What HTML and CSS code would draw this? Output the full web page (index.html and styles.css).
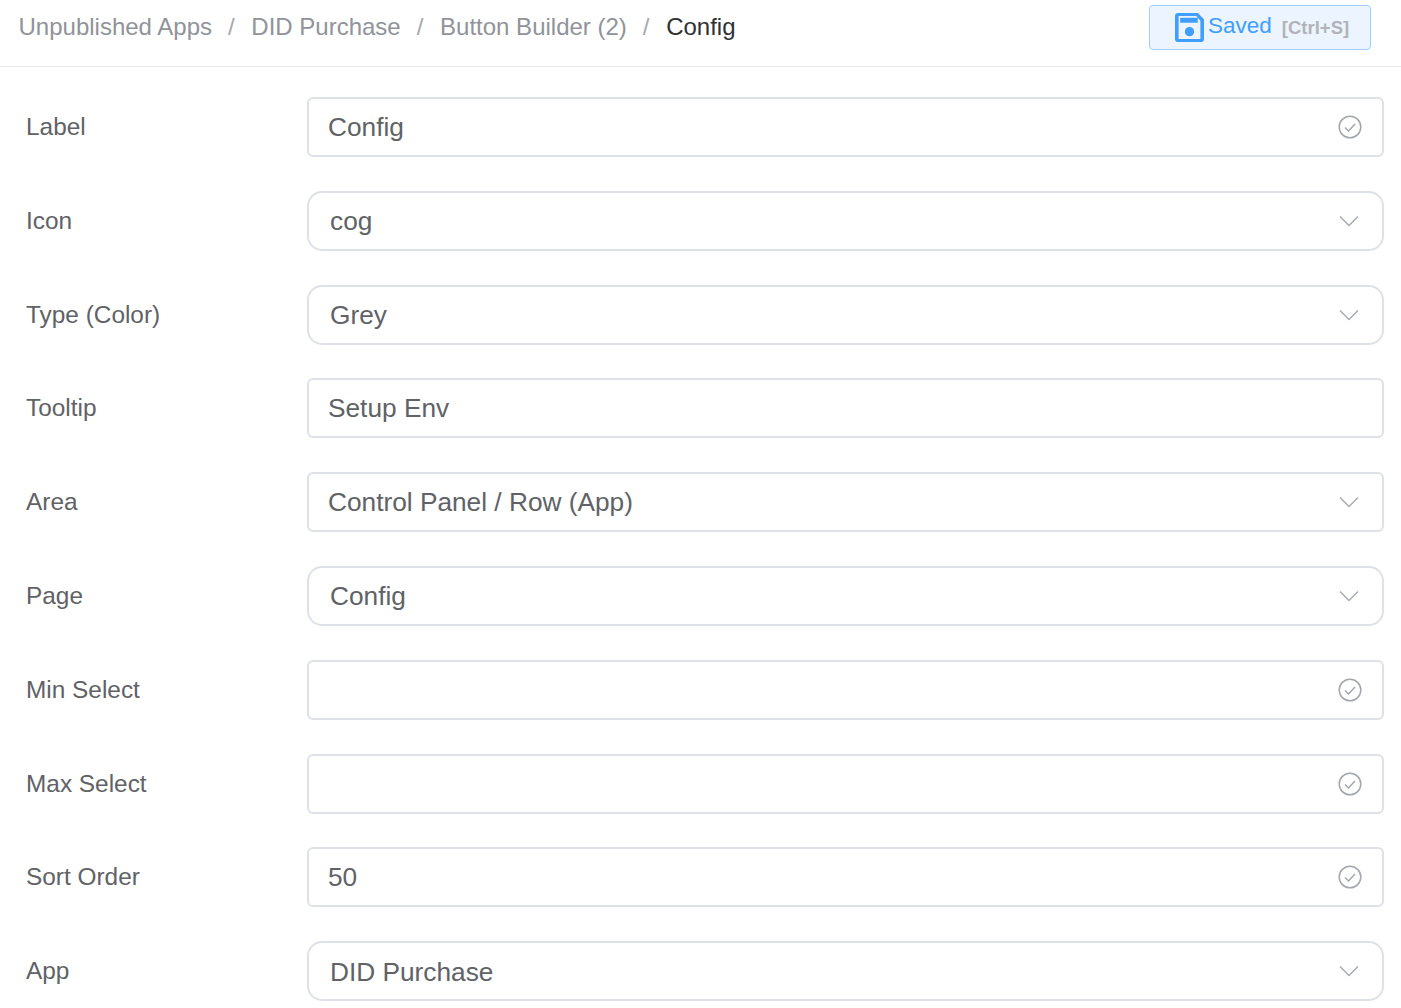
FILE: index.html
```html
<!DOCTYPE html>
<html lang="en">
<head>
    <meta charset="UTF-8">
    <title>Config</title>
    <link rel="stylesheet" href="styles.css">
</head>
<body>
    <div class="header">
        <div class="breadcrumb">
            <span class="crumb">Unpublished Apps</span><span class="sep">/</span>
            <span class="crumb">DID Purchase</span><span class="sep">/</span>
            <span class="crumb">Button Builder (2)</span><span class="sep">/</span>
            <span class="crumb current">Config</span>
        </div>
        <button class="save-btn">
            <svg class="save-icon" viewBox="0 0 28 28"><path fill="#409eff" fill-rule="evenodd" d="M3 0h19l6 6v19a3 3 0 0 1-3 3H3a3 3 0 0 1-3-3V3a3 3 0 0 1 3-3zM3.500 3v22h21V7.500L20.500 3zM5 4.500h17v5H5zM14 13.500a4.500 4.500 0 1 1 0 9 4.500 4.500 0 0 1 0-9z"/></svg>
            <span class="saved">Saved</span>
            <span class="shortcut">[Ctrl+S]</span>
        </button>
    </div>

    <form class="form">
        <div class="row">
            <label>Label</label>
            <div class="field"><span class="value">Config</span><svg class="check" viewBox="0 0 24 24"><circle cx="12" cy="12" r="10.800"/><path d="M7 12.500l3.500 3.500L17 9"/></svg></div>
        </div>
        <div class="row">
            <label>Icon</label>
            <div class="field round"><span class="value">cog</span><svg class="arrow" viewBox="0 0 20 12"><path d="M1 1.500l9 9 9-9"/></svg></div>
        </div>
        <div class="row">
            <label>Type (Color)</label>
            <div class="field round"><span class="value">Grey</span><svg class="arrow" viewBox="0 0 20 12"><path d="M1 1.500l9 9 9-9"/></svg></div>
        </div>
        <div class="row">
            <label>Tooltip</label>
            <div class="field"><span class="value">Setup Env</span></div>
        </div>
        <div class="row">
            <label>Area</label>
            <div class="field"><span class="value">Control Panel / Row (App)</span><svg class="arrow" viewBox="0 0 20 12"><path d="M1 1.500l9 9 9-9"/></svg></div>
        </div>
        <div class="row">
            <label>Page</label>
            <div class="field round"><span class="value">Config</span><svg class="arrow" viewBox="0 0 20 12"><path d="M1 1.500l9 9 9-9"/></svg></div>
        </div>
        <div class="row">
            <label>Min Select</label>
            <div class="field"><span class="value"></span><svg class="check" viewBox="0 0 24 24"><circle cx="12" cy="12" r="10.800"/><path d="M7 12.500l3.500 3.500L17 9"/></svg></div>
        </div>
        <div class="row">
            <label>Max Select</label>
            <div class="field"><span class="value"></span><svg class="check" viewBox="0 0 24 24"><circle cx="12" cy="12" r="10.800"/><path d="M7 12.500l3.500 3.500L17 9"/></svg></div>
        </div>
        <div class="row">
            <label>Sort Order</label>
            <div class="field"><span class="value">50</span><svg class="check" viewBox="0 0 24 24"><circle cx="12" cy="12" r="10.800"/><path d="M7 12.500l3.500 3.500L17 9"/></svg></div>
        </div>
        <div class="row">
            <label>App</label>
            <div class="field round"><span class="value">DID Purchase</span><svg class="arrow" viewBox="0 0 20 12"><path d="M1 1.500l9 9 9-9"/></svg></div>
        </div>
    </form>
</body>
</html>
```

FILE: styles.css
```css
html, body {
    height: 100%;
    overflow: hidden;
}
body {
    margin: 0;
    background: white;
    font-family: "Liberation Sans", Arial, sans-serif;
    color: #606266;
}
.header {
    height: 67px;
    box-sizing: border-box;
    border-bottom: 1px solid #e6e6ee;
    display: flex;
    align-items: flex-start;
    justify-content: space-between;
    padding: 5px 30px 0 18.500px;
}
.breadcrumb {
    font-size: 24px;
    line-height: 44px;
    color: #909399;
    white-space: nowrap;
}
.sep {
    margin: 0 10px 0 16px;
    color: #a6a9ad;
}
.current {
    color: #303133;
}
.save-btn {
    display: flex;
    align-items: center;
    width: 222px;
    height: 45px;
    padding: 0 0 0 25px;
    border: 1px solid #a0cfff;
    border-radius: 4px;
    background: #ecf5ff;
    color: #409eff;
    font-family: inherit;
    font-size: 22.500px;
    white-space: nowrap;
}
.save-icon {
    width: 29px;
    height: 29px;
    margin-right: 4px;
    flex: none;
}
.saved {
    margin-bottom: 3px;
}
.shortcut {
    margin-left: 10px;
    font-size: 18.500px;
    font-weight: bold;
    color: #b1b3b8;
}
.form {
    padding: 30px 17px 0 26px;
}
.row {
    display: flex;
    align-items: center;
    height: 60px;
    margin-bottom: 33.800px;
}
.row label {
    width: 281px;
    flex: none;
    font-size: 24.400px;
}
.field {
    flex: 1;
    height: 60px;
    box-sizing: border-box;
    display: flex;
    align-items: center;
    justify-content: space-between;
    padding: 0 20px 0 19px;
    border: 2px solid #dfe1e8;
    border-radius: 6px;
}
.field.round {
    border-radius: 15px;
    padding-left: 21px;
}
.value {
    font-size: 26.250px;
}
.round .value {
    margin-top: 2px;
}
.check {
    width: 24px;
    height: 24px;
    fill: none;
    stroke: #a3a6ad;
    stroke-width: 1.500;
}
.arrow {
    width: 20px;
    height: 12px;
    margin-right: 3px;
    fill: none;
    stroke: #a8abb2;
    stroke-width: 1.500;
}
```
